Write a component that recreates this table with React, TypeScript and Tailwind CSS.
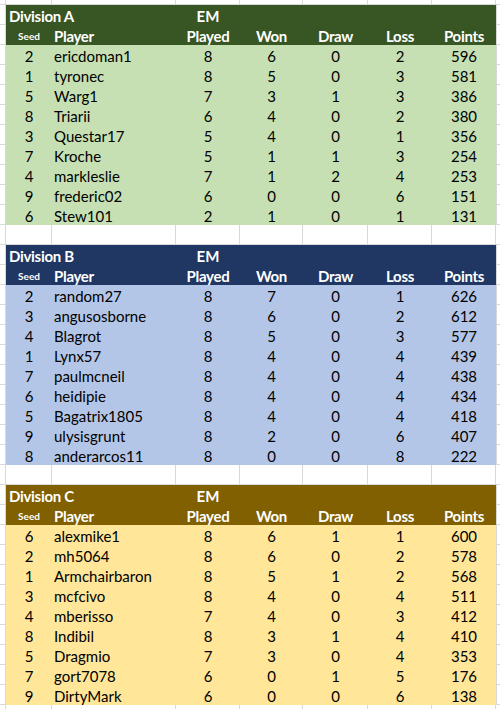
import React from 'react';

type Row = [number, string, number, number, number, number, number];

type Division = {
  name: string;
  head: string;
  body: string;
  rows: Row[];
};

const divisions: Division[] = [
  {
    name: 'Division A',
    head: 'bg-[#375623]',
    body: 'bg-[#c6e0b4]',
    rows: [
      [2, 'ericdoman1', 8, 6, 0, 2, 596],
      [1, 'tyronec', 8, 5, 0, 3, 581],
      [5, 'Warg1', 7, 3, 1, 3, 386],
      [8, 'Triarii', 6, 4, 0, 2, 380],
      [3, 'Questar17', 5, 4, 0, 1, 356],
      [7, 'Kroche', 5, 1, 1, 3, 254],
      [4, 'markleslie', 7, 1, 2, 4, 253],
      [9, 'frederic02', 6, 0, 0, 6, 151],
      [6, 'Stew101', 2, 1, 0, 1, 131],
    ],
  },
  {
    name: 'Division B',
    head: 'bg-[#203764]',
    body: 'bg-[#b4c6e7]',
    rows: [
      [2, 'random27', 8, 7, 0, 1, 626],
      [3, 'angusosborne', 8, 6, 0, 2, 612],
      [4, 'Blagrot', 8, 5, 0, 3, 577],
      [1, 'Lynx57', 8, 4, 0, 4, 439],
      [7, 'paulmcneil', 8, 4, 0, 4, 438],
      [6, 'heidipie', 8, 4, 0, 4, 434],
      [5, 'Bagatrix1805', 8, 4, 0, 4, 418],
      [9, 'ulysisgrunt', 8, 2, 0, 6, 407],
      [8, 'anderarcos11', 8, 0, 0, 8, 222],
    ],
  },
  {
    name: 'Division C',
    head: 'bg-[#806000]',
    body: 'bg-[#ffe699]',
    rows: [
      [6, 'alexmike1', 8, 6, 1, 1, 600],
      [2, 'mh5064', 8, 6, 0, 2, 578],
      [1, 'Armchairbaron', 8, 5, 1, 2, 568],
      [3, 'mcfcivo', 8, 4, 0, 4, 511],
      [4, 'mberisso', 7, 4, 0, 3, 412],
      [8, 'Indibil', 8, 3, 1, 4, 410],
      [5, 'Dragmio', 7, 3, 0, 4, 353],
      [7, 'gort7078', 6, 0, 1, 5, 176],
      [9, 'DirtyMark', 6, 0, 0, 6, 138],
    ],
  },
];

const widths = ['w-[46px]', 'w-[124px]', 'w-[64px]', 'w-[63px]', 'w-[65px]', 'w-[64px]', 'w-[64px]'];

// plain spreadsheet row with gridlines only
const EmptyRow: React.FC<{ h?: string }> = ({ h = 'h-5' }) => (
  <div className={`flex ${h}`}>
    <div className="w-[6px] border-r border-b border-[#d9d9d9]" />
    {widths.map((w, i) => (
      <div key={i} className={`${w} border-r border-b border-[#d9d9d9]`} />
    ))}
    <div className="flex-1 border-b border-[#d9d9d9]" />
  </div>
);

const Line: React.FC<{ bg: string; children: React.ReactNode }> = ({ bg, children }) => (
  <div className="flex h-5">
    <div className="w-[6px] border-r border-b border-[#d9d9d9]" />
    <div className={`flex w-[490px] ${bg}`}>{children}</div>
    <div className="flex-1 border-b border-[#d9d9d9] border-l" />
  </div>
);

const Table: React.FC<{ d: Division }> = ({ d }) => (
  <div>
    <Line bg={d.head}>
      <div className="w-[170px] pl-[3px] pt-[2px] text-[15px] font-bold text-white leading-[18px] tracking-[-0.3px]">{d.name}</div>
      <div className="w-[64px] pt-[2px] text-center text-[15px] font-bold text-white leading-[18px]">EM</div>
    </Line>
    <Line bg={d.head}>
      <div className="w-[46px] pt-[3px] text-center text-[10px] font-bold text-white leading-[17px]">Seed</div>
      <div className="w-[124px] pl-[2px] pt-[2px] text-[15px] font-bold text-white leading-[18px] tracking-[-0.3px]">Player</div>
      {['Played', 'Won', 'Draw', 'Loss', 'Points'].map((h, i) => (
        <div key={h} className={`${widths[i + 2]} pt-[2px] text-center text-[15px] font-bold text-white leading-[18px] tracking-[-0.3px]`}>
          {h}
        </div>
      ))}
    </Line>
    {d.rows.map((r) => (
      <Line key={r[1]} bg={d.body}>
        {r.map((v, i) => (
          <div
            key={i}
            className={`${widths[i]} pt-[2px] text-[15px] text-black leading-[18px] ${i === 1 ? 'pl-[2px]' : 'text-center'}`}
          >
            {v}
          </div>
        ))}
      </Line>
    ))}
  </div>
);

const App: React.FC = () => {
  return (
    <div className="w-[500px] h-[709px] overflow-hidden bg-white font-['Lato','Liberation_Sans',sans-serif]">
      <EmptyRow h="h-[5px]" />
      <Table d={divisions[0]} />
      <EmptyRow />
      <Table d={divisions[1]} />
      <EmptyRow />
      <Table d={divisions[2]} />
      <EmptyRow />
    </div>
  );
};

export default App;
